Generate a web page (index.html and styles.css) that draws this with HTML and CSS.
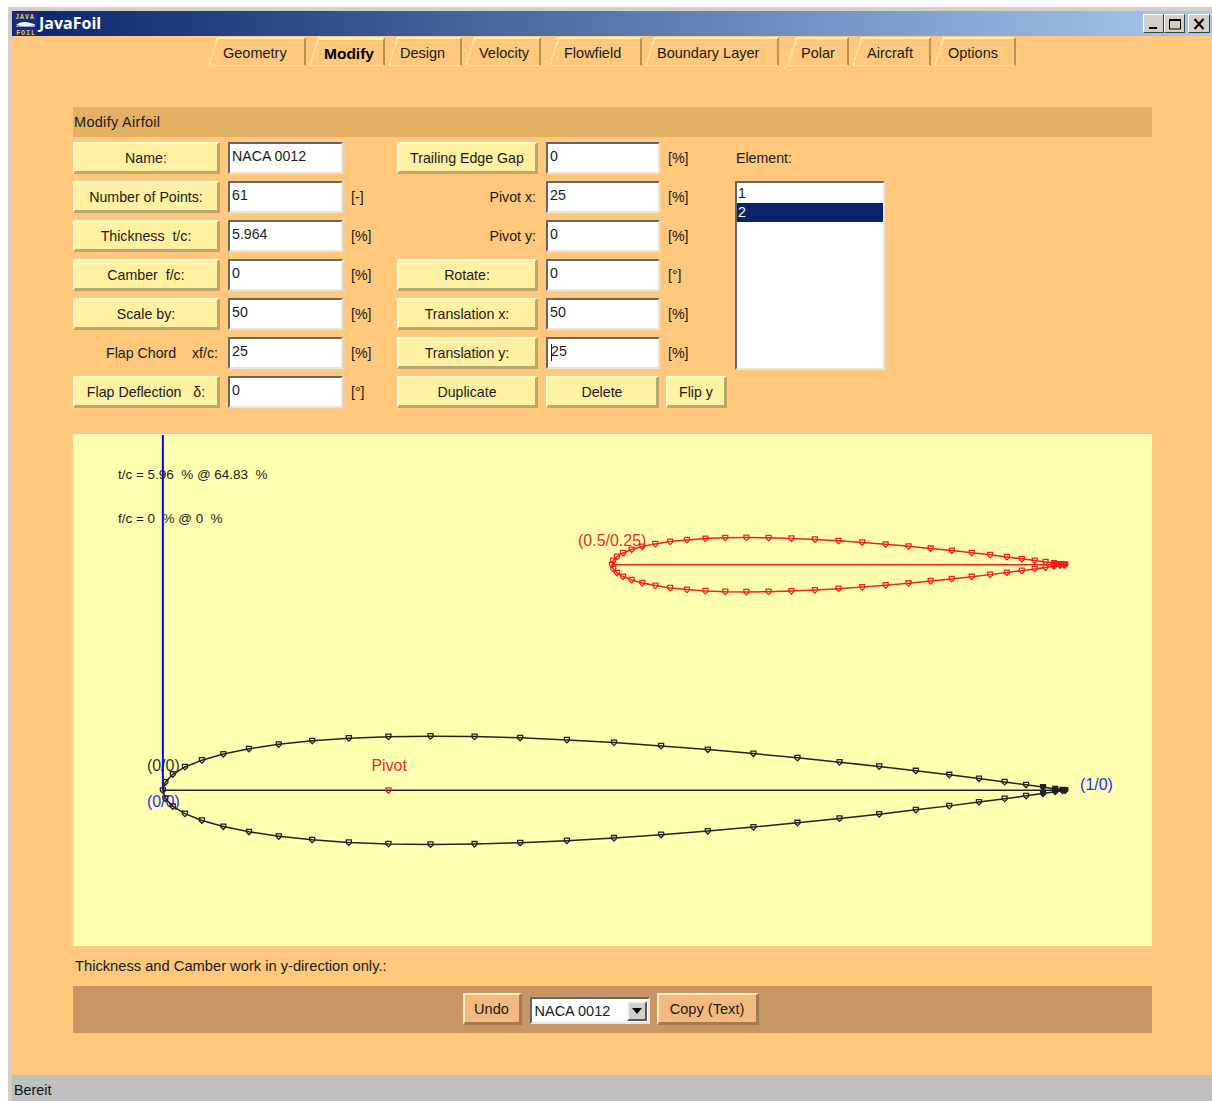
FILE: index.html
```html
<!DOCTYPE html>
<html lang="de">
<head>
<meta charset="utf-8">
<title>JavaFoil</title>
<link rel="stylesheet" href="styles.css">
</head>
<body>
<div class="window">
  <header class="titlebar">
    <svg class="app-icon" width="24" height="24" viewBox="0 0 24 24">
      <rect width="24" height="24" fill="#1a2a7c"/>
      <text class="app-icon-text" x="12" y="6.500" text-anchor="middle">JAVA</text>
      <path d="M3 13 C7 9 15 9 22 12.400 L22 13.400 C15 14.500 8 14.500 3 13Z" fill="#f4f4ff"/>
      <rect x="3" y="14" width="19" height="1" fill="#8fa0d8"/>
      <text class="app-icon-text" x="13" y="23" text-anchor="middle">FOIL</text>
    </svg>
    <span class="title-text">JavaFoil</span>
    <div class="win-buttons">
      <button class="win-btn"><svg width="14" height="12" viewBox="0 0 14 12"><rect x="2" y="9" width="8" height="2" fill="#000"/></svg></button>
      <button class="win-btn"><svg width="14" height="12" viewBox="0 0 14 12"><path d="M1.5 1.5h11v9.500h-11z" fill="none" stroke="#000"/><rect x="1" y="1" width="12" height="2"/></svg></button>
      <button class="win-btn win-btn-close"><svg width="14" height="12" viewBox="0 0 14 12"><path d="M2.500 1 L11.500 11 M11.500 1 L2.500 11" stroke="#000" stroke-width="2" fill="none"/></svg></button>
    </div>
  </header>

  <main class="content">
    <nav class="tabs">
      <div class="tab tab-roomy">Geometry</div>
      <div class="tab tab-roomy tab-active">Modify</div>
      <div class="tab tab-tight">Design</div>
      <div class="tab tab-far">Velocity</div>
      <div class="tab tab-roomy">Flowfield</div>
      <div class="tab tab-far tab-tight">Boundary Layer</div>
      <div class="tab">Polar</div>
      <div class="tab tab-roomy">Aircraft</div>
      <div class="tab">Options</div>
    </nav>

    <section class="panel">
      <h2 class="panel-title">Modify Airfoil</h2>

      <div class="form">
        <div class="btn">Name:</div>
        <div class="field">NACA 0012</div>
        <div></div>
        <div class="btn">Trailing Edge Gap</div>
        <div class="field">0</div>
        <div class="unit">[%]</div>
        <div class="element-label">Element:</div>

        <div class="btn">Number of Points:</div>
        <div class="field">61</div>
        <div class="unit">[-]</div>
        <div class="label">Pivot x:</div>
        <div class="field">25</div>
        <div class="unit">[%]</div>
        <div class="list">
          <div class="list-item">1</div>
          <div class="list-item list-item-selected">2</div>
        </div>

        <div class="btn">Thickness&nbsp; t/c:</div>
        <div class="field">5.964</div>
        <div class="unit">[%]</div>
        <div class="label">Pivot y:</div>
        <div class="field">0</div>
        <div class="unit">[%]</div>

        <div class="btn">Camber&nbsp; f/c:</div>
        <div class="field">0</div>
        <div class="unit">[%]</div>
        <div class="btn">Rotate:</div>
        <div class="field">0</div>
        <div class="unit">[°]</div>

        <div class="btn">Scale by:</div>
        <div class="field">50</div>
        <div class="unit">[%]</div>
        <div class="btn">Translation x:</div>
        <div class="field">50</div>
        <div class="unit">[%]</div>

        <div class="label">Flap Chord &nbsp; &nbsp;xf/c:</div>
        <div class="field">25</div>
        <div class="unit">[%]</div>
        <div class="btn">Translation y:</div>
        <div class="field"><span class="caret"></span>25</div>
        <div class="unit">[%]</div>

        <div class="btn">Flap Deflection &nbsp; δ:</div>
        <div class="field">0</div>
        <div class="unit">[°]</div>
        <div class="btn">Duplicate</div>
        <div class="btn btn-delete">Delete</div>
        <div class="btn btn-flip">Flip y</div>
      </div>

      <svg class="plot" width="1079" height="512" viewBox="73 434 1079 512">
        <text class="plot-text" x="117" y="478">t/c = 5.96  % @ 64.83  %</text>
        <text class="plot-text" x="117" y="522">f/c = 0  % @ 0  %</text>
        <text class="plot-label fill-black" x="146" y="771">(0/0)</text>
        <text class="plot-label fill-blue" x="146" y="807">(0/0)</text>
        <text class="plot-label fill-blue" x="1081" y="790">(1/0)</text>
        <text class="plot-label fill-red" x="371" y="771">Pivot</text>
        <text class="plot-label fill-red" x="578" y="545">(0.5/0.25)</text>
        <line class="axis" x1="162" y1="434" x2="162" y2="790"/>
        <g id="airfoils"></g>
      </svg>

      <p class="hint">Thickness and Camber work in y-direction only.:</p>

      <div class="actions">
        <div class="btn btn-action btn-undo">Undo</div>
        <div class="combo">
          <span class="combo-value">NACA 0012</span>
          <span class="combo-arrow"><svg width="10" height="6" viewBox="0 0 10 6"><path d="M0 0h10L5 6z" fill="#000"/></svg></span>
        </div>
        <div class="btn btn-action btn-copy">Copy (Text)</div>
      </div>
    </section>
  </main>

  <footer class="statusbar">Bereit</footer>
</div>
<script src="plot.js"></script>
</body>
</html>
```

FILE: styles.css
```css
* {
  box-sizing: border-box;
}

html,
body {
  margin: 0;
  height: 100%;
  overflow: hidden;
  background: #fff;
}

body {
  padding: 7px 0 0 8px;
  font: 14.200px "Liberation Sans", Arial, sans-serif;
  color: #1a1a1a;
}

.window {
  height: 1094px;
  display: flex;
  flex-direction: column;
  overflow: hidden;
  border-top: 4px solid #d4d0c8;
  border-left: 4px solid #d4d0c8;
}

/* Title bar */
.titlebar {
  flex: none;
  height: 25px;
  display: flex;
  align-items: center;
  padding: 0 2px 0 1px;
  background: linear-gradient(90deg, #0a246a, #a6caf0);
}

.app-icon {
  flex: none;
}

.app-icon-text {
  font: bold 6.500px "Liberation Mono", monospace;
  letter-spacing: 1px;
  fill: #e8d050;
}

.title-text {
  margin: -2px 0 0 2px;
  font: bold 16px "Open Sans", "Liberation Sans", sans-serif;
  color: #fff;
}

.win-buttons {
  margin-left: auto;
  display: flex;
}

.win-btn {
  width: 21px;
  height: 19px;
  padding: 0;
  display: flex;
  align-items: center;
  justify-content: center;
  background: #d4d0c8;
  border: 1px solid;
  border-color: #fff #404040 #404040 #fff;
}

.win-btn-close {
  width: 22px;
  margin-left: 3px;
}

/* Main area */
.content {
  flex: 1;
  min-height: 0;
  background: #ffc87c;
  padding: 1px 60px 0 61px;
}

.tabs {
  height: 29px;
  margin-left: 135px;
  display: grid;
  grid-template-columns: 101px 79px 77px 84px 96px 142px 65px 82px 82px;
}

.tab {
  position: relative;
  margin-right: 3px;
  padding: 6px 0 0 14px;
  border-top: 2px solid #fff5b0;
  border-bottom: 1px solid #fff5b0;
  border-right: 2px solid #b4935a;
  white-space: nowrap;
  font-size: 14.500px;
  clip-path: polygon(9px 0, 100% 0, 100% 100%, 0 100%);
}

.tab:last-child {
  margin-right: 0;
}

/* Slanted, hatched leading edge of a tab */
.tab::before {
  content: "";
  position: absolute;
  top: -2px;
  bottom: -1px;
  left: 3px;
  width: 3px;
  transform: skewX(-18deg);
  background: repeating-linear-gradient(180deg, #fff5b0 0 3px, #ffd890 3px 5px);
}

.tab-roomy {
  padding-left: 15px;
}

.tab-tight {
  padding-left: 12px;
}

.tab-far {
  margin-right: 8px;
}

.tab-active {
  border-top-width: 3px;
  font-size: 15.500px;
  font-weight: bold;
  padding-top: 5px;
  color: #000;
}

.panel {
  margin-top: 41px;
}

.panel-title {
  margin: 0;
  height: 30px;
  display: flex;
  align-items: center;
  padding-left: 1px;
  background: #e4b064;
  font-size: 14.500px;
  font-weight: normal;
  letter-spacing: 0.300px;
}

/* Form grid */
.form {
  margin-top: 5px;
  display: grid;
  grid-template-columns: 147px 115px 38px 141px 114px 59px 150px;
  grid-template-rows: repeat(7, 32px);
  column-gap: 8px;
  row-gap: 7px;
}

.btn {
  display: flex;
  align-items: center;
  justify-content: center;
  white-space: nowrap;
  background: #fff0a2;
  border-style: solid;
  border-width: 2px 3px 3px 2px;
  border-color: #fffbd0 #b9a96e #b9a96e #fffbd0;
}

.field {
  padding: 4px 0 0 2px;
  background: #fff;
  border: 2px solid;
  border-color: #666 #e6e6e0 #e6e6e0 #666;
  line-height: 16px;
  white-space: nowrap;
}

.unit {
  display: flex;
  align-items: center;
}

.label {
  display: flex;
  align-items: center;
  justify-content: flex-end;
  padding-right: 2px;
  white-space: nowrap;
}

.element-label {
  display: flex;
  align-items: center;
  padding-left: 1px;
}

.list {
  grid-column: 7;
  grid-row: 2 / span 5;
  margin-bottom: -1px;
  padding-top: 1px;
  background: #fff;
  border: 2px solid;
  border-color: #666 #e6e6e0 #e6e6e0 #666;
}

.list-item {
  height: 19px;
  padding-left: 1px;
  line-height: 19px;
}

.list-item-selected {
  background: #0a246a;
  color: #fff;
}

.caret {
  display: inline-block;
  width: 1px;
  height: 17px;
  margin: 0 -1px -5px 1px;
  background: #222;
}

.btn-delete {
  margin-right: 1px;
}

.btn-flip {
  margin-left: -2px;
}

/* Airfoil plot */
.plot {
  display: block;
  margin-top: 26px;
  background: #ffffb0;
  border-top: 1px solid #fff8d8;
}

.plot-text {
  font: 13.500px "Liberation Sans", Arial, sans-serif;
  fill: #1a1a1a;
  white-space: pre;
}

.plot-label {
  font: 16px "Liberation Sans", Arial, sans-serif;
}

.fill-black {
  fill: #333;
}

.fill-blue {
  fill: #2a2aff;
}

.fill-red {
  fill: #f02a2a;
}

.axis {
  stroke: #0000ff;
  stroke-width: 2;
}

.hint {
  margin: 0;
  height: 40px;
  padding: 12px 0 0 2px;
  font-size: 14.700px;
}

.actions {
  height: 47px;
  display: flex;
  justify-content: center;
  align-items: flex-start;
  gap: 8px;
  padding: 7px 4px 0 0;
  background: #c89664;
}

.btn-action {
  height: 32px;
  background: #f4b880;
  border-color: #fff0b8 #a07c50 #a07c50 #fff0b8;
  font-size: 14.600px;
}

.btn-undo {
  width: 59px;
}

.btn-copy {
  width: 102px;
  margin-left: -1px;
}

.combo {
  width: 120px;
  height: 27px;
  margin-top: 4px;
  display: flex;
  align-items: center;
  justify-content: space-between;
  padding-left: 3px;
  background: #fff;
  border: 2px solid;
  border-color: #666 #e6e6e0 #e6e6e0 #666;
  font-size: 14.500px;
}

.combo-arrow {
  width: 20px;
  height: 20px;
  margin-right: 1px;
  display: flex;
  align-items: center;
  justify-content: center;
  background: #d4d0c8;
  border: 2px solid;
  border-color: #f4f4f0 #555 #555 #f4f4f0;
}

.statusbar {
  flex: none;
  height: 26px;
  padding: 3px 0 0 2px;
  display: flex;
  align-items: center;
  background: #c0c0c0;
  font-size: 14.300px;
  color: #111;
}
```

FILE: plot.js
```js
// Draws the two airfoil elements as NACA 4-digit sections with cosine panel spacing.
(function () {
  var NS = "http://www.w3.org/2000/svg";
  var PANELS = 30;
  var THICKNESS = 0.12;
  var MARKER = "M-2.5 -2.5h5v3l-2.5 2.5l-2.500 -2.500z";
  var CLUSTER_START = 0.975; // panels here are so short that the markers merge

  function halfThickness(x) {
    var r = Math.sqrt(x);
    return 5 * THICKNESS * (0.2969 * r - 0.126 * x - 0.3516 * x * x +
      0.2843 * x * x * x - 0.1036 * x * x * x * x);
  }

  function add(parent, name, attrs) {
    var el = document.createElementNS(NS, name);
    Object.keys(attrs).forEach(function (k) {
      el.setAttribute(k, attrs[k]);
    });
    parent.appendChild(el);
    return el;
  }

  function drawElement(root, x0, y0, chord, colour, width) {
    var points = [];
    var i, x;
    for (i = PANELS; i >= 0; i--) {
      x = (1 - Math.cos(Math.PI * i / PANELS)) / 2;
      points.push([x0 + x * chord, y0 - halfThickness(x) * chord, x]);
    }
    for (i = 1; i <= PANELS; i++) {
      x = (1 - Math.cos(Math.PI * i / PANELS)) / 2;
      points.push([x0 + x * chord, y0 + halfThickness(x) * chord, x]);
    }
    add(root, "polyline", {
      points: points.map(function (p) { return p[0].toFixed(1) + "," + p[1].toFixed(1); }).join(" "),
      fill: "none",
      stroke: colour,
      "stroke-width": width
    });
    add(root, "line", {
      x1: x0, y1: y0, x2: x0 + chord, y2: y0,
      stroke: colour,
      "stroke-width": width
    });
    points.forEach(function (p) {
      add(root, "path", {
        d: MARKER,
        transform: "translate(" + p[0].toFixed(1) + " " + p[1].toFixed(1) + ")",
        fill: p[2] > CLUSTER_START ? colour : "none",
        stroke: colour,
        "stroke-width": 1.3
      });
    });
  }

  var root = document.getElementById("airfoils");
  drawElement(root, 162, 790, 904, "#222", 1.5);
  drawElement(root, 612, 564, 454, "#f52020", 1.5);
  add(root, "path", {
    d: MARKER,
    transform: "translate(388 790)",
    fill: "none",
    stroke: "#f52020",
    "stroke-width": 1.3
  });
})();
```
